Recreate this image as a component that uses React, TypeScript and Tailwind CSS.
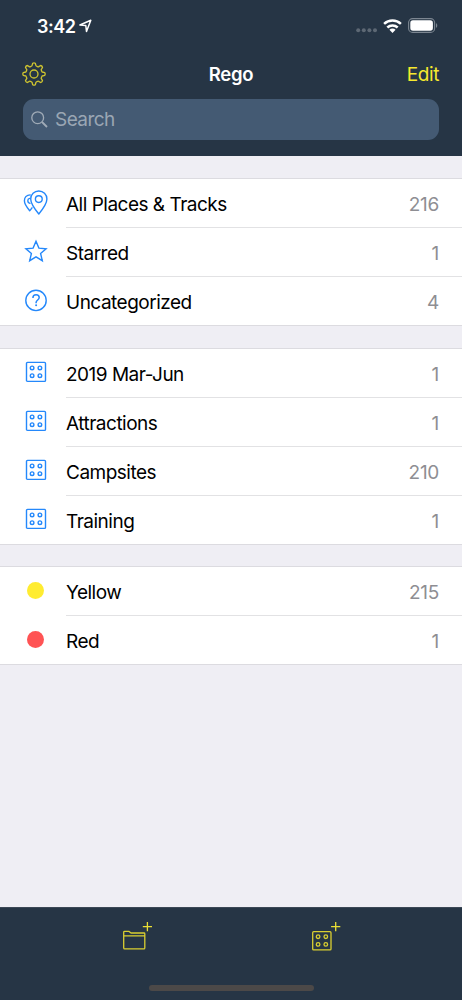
import type { ReactNode } from 'react';

interface Row {
  label: string;
  count: number;
  icon: ReactNode;
}

// Outline with eight rounded teeth, centred on 0,0
const gearPath = () => {
  const point = (radius: number, degrees: number) => {
    const a = (degrees * Math.PI) / 180;
    return `${(radius * Math.sin(a)).toFixed(2)} ${(-radius * Math.cos(a)).toFixed(2)}`;
  };
  let d = `M${point(10.8, -7)}`;
  for (let i = 0; i < 8; i++) {
    const a = i * 45;
    d += `Q${point(11.6, a)} ${point(10.8, a + 7)}`;
    d += `L${point(9.2, a + 11)}Q${point(8, a + 14)} ${point(8.3, a + 19)}`;
    d += `Q${point(7.9, a + 22.5)} ${point(8.3, a + 26)}`;
    d += `Q${point(8, a + 31)} ${point(9.2, a + 34)}L${point(10.8, a + 38)}`;
  }
  return `${d}Z`;
};

function GearIcon() {
  return (
    <svg width="24" height="24" viewBox="-12 -12 24 24" fill="none" stroke="#cfc430" strokeWidth="1.3" strokeLinejoin="round">
      <path d={gearPath()} />
      <circle r="4" />
    </svg>
  );
}

function PlacesIcon() {
  return (
    <svg width="26" height="26" viewBox="0 0 26 26" fill="none" stroke="#2488fb" strokeWidth="1.4" strokeLinejoin="round" strokeLinecap="round">
      <path d="M15.8 1c4.5 0 8.1 3.5 8.1 8 0 4.7-4.5 10.6-8.1 15-3.6-4.4-8.1-10.3-8.1-15 0-4.5 3.6-8 8.1-8Z" />
      <circle cx="15.8" cy="9.1" r="3.4" />
      <path d="M7.2 4.9C3.8 5 1.4 7.4 1.4 10.8c0 3.1 2.7 6.9 5.3 9.9.9-1 1.6-1.9 2.3-2.9M6.6 8.4c-2.4.5-2.5 4.4.3 5" />
    </svg>
  );
}

function StarIcon() {
  return (
    <svg width="26" height="26" viewBox="0 0 26 26" fill="none" stroke="#2488fb" strokeWidth="1.4">
      <path d="M13 2.2l2.9 6.9 7.2.6-5.5 4.8 1.7 7.2-6.3-3.8-6.3 3.8 1.7-7.2-5.5-4.8 7.2-.6Z" />
    </svg>
  );
}

function QuestionIcon() {
  return (
    <svg width="26" height="26" viewBox="0 0 26 26" fill="none" stroke="#2488fb" strokeWidth="1.4">
      <circle cx="13" cy="12.4" r="10.2" />
      <path d="M9.9 9.9c0-2 1.3-3.1 3.2-3.1s3.1 1.2 3.1 2.8c0 2.4-3.1 2.5-3.1 5v.6" strokeWidth="1.5" />
      <circle cx="13.1" cy="17.3" r="1" fill="#2488fb" stroke="none" />
    </svg>
  );
}

function CategoryIcon() {
  return (
    <svg width="26" height="26" viewBox="0 0 26 26" fill="none" stroke="#2488fb" strokeWidth="1.4">
      <rect x="3.5" y="2.4" width="19" height="19" rx="1" />
      <circle cx="9.1" cy="7.9" r="1.8" />
      <circle cx="16.9" cy="7.9" r="1.8" />
      <circle cx="9.1" cy="15.7" r="1.8" />
      <circle cx="16.9" cy="15.7" r="1.8" />
    </svg>
  );
}

function YellowDot() {
  return <span className="mr-px mb-px block size-[17px] rounded-full bg-[#ffec31]" />;
}

function RedDot() {
  return <span className="mr-px mb-px block size-[17px] rounded-full bg-[#ff5354]" />;
}

const library: Row[] = [
  { label: 'All Places & Tracks', count: 216, icon: <PlacesIcon /> },
  { label: 'Starred', count: 1, icon: <StarIcon /> },
  { label: 'Uncategorized', count: 4, icon: <QuestionIcon /> },
];

const categories: Row[] = [
  { label: '2019 Mar-Jun', count: 1, icon: <CategoryIcon /> },
  { label: 'Attractions', count: 1, icon: <CategoryIcon /> },
  { label: 'Campsites', count: 210, icon: <CategoryIcon /> },
  { label: 'Training', count: 1, icon: <CategoryIcon /> },
];

const colors: Row[] = [
  { label: 'Yellow', count: 215, icon: <YellowDot /> },
  { label: 'Red', count: 1, icon: <RedDot /> },
];

function Section({ rows }: { rows: Row[] }) {
  return (
    <ul className="border-t border-[#dcdbe0] bg-white">
      {rows.map((row, index) => (
        <li key={row.label} className="flex h-[49px]">
          <div className={`flex w-[66px] shrink-0 items-center pb-px pl-[23px] ${index === rows.length - 1 ? 'border-b border-[#dcdbe0]' : ''}`}>
            <div className="flex w-[26px] justify-center">{row.icon}</div>
          </div>
          <div className={`flex flex-1 items-center justify-between border-b pt-[5px] pr-[23px] ${index === rows.length - 1 ? 'border-[#dcdbe0]' : 'border-[#e2e2e4]'}`}>
            <span className="text-[19px] tracking-[-0.5px] text-black">{row.label}</span>
            <span className="text-[19px] tracking-[-0.3px] text-[#8e8e93]">{row.count}</span>
          </div>
        </li>
      ))}
    </ul>
  );
}

function StatusBar() {
  return (
    <div className="flex h-[52px] items-center justify-between pr-[24px] pl-[37px]">
      <div className="flex items-center gap-[4px]">
        <span className="text-[18px] font-semibold tracking-[-0.5px] text-white">3:42</span>
        <svg width="13" height="14" viewBox="0 0 13 14" fill="none" stroke="#fff" strokeWidth="1.5" strokeLinejoin="round">
          <path d="M11.8 1.2L7.5 12.4 6.8 6.5.9 6Z" />
        </svg>
      </div>
      <div className="flex items-center pb-px">
        <svg width="22" height="14" viewBox="0 0 22 14" fill="#5d6874">
          <circle cx="2.2" cy="11.2" r="2" />
          <circle cx="7.8" cy="11.2" r="2" />
          <circle cx="13.4" cy="11.2" r="2" />
          <circle cx="19" cy="11.2" r="2" />
        </svg>
        <svg className="ml-[5px]" width="19" height="14" viewBox="0 0 19 14" fill="none" stroke="#fff" strokeWidth="2.5">
          <path d="M1.1 4.9c4.7-4.5 12.1-4.5 16.8 0M4.3 8.5c3-2.8 7.4-2.8 10.4 0" />
          <path d="M6.4 10.8c1.8-1.6 4.4-1.6 6.2 0l-3.1 3.1Z" fill="#fff" stroke="none" />
        </svg>
        <svg className="ml-[6px]" width="30" height="15" viewBox="0 0 30 15">
          <rect x=".6" y=".6" width="26" height="13.8" rx="4" fill="none" stroke="#7c8691" strokeWidth="1.1" />
          <rect x="2.3" y="2.3" width="22.6" height="10.4" rx="2.6" fill="#fff" />
          <path d="M28 5.2v4.6c1.7-.6 1.7-4 0-4.6Z" fill="#7c8691" />
        </svg>
      </div>
    </div>
  );
}

function Toolbar() {
  return (
    <div className="h-[93px] border-t border-[#3c4856] bg-[#263545]">
      <div className="flex h-[77px] items-start justify-between pt-[13px] pr-[119px] pl-[122px]">
        <svg width="32" height="32" viewBox="0 0 32 32" fill="none" stroke="#dacf31" strokeWidth="1.3" strokeLinejoin="round">
          <path d="M1.7 14.8h21.1M1.7 26.5V11.2c0-.5.3-.8.8-.8h4.6l1.9 1.6h13c.5 0 .8.3.8.8v13.9c0 .9-.3 1.2-.8 1.2H2.7c-.7 0-1-.3-1-1.2Z" />
          <path d="M25.4 1.1v9.2M20.8 5.7H30" stroke="#eadf35" />
        </svg>
        <svg width="32" height="32" viewBox="0 0 32 32" fill="none" stroke="#dacf31" strokeWidth="1.3">
          <rect x="1.7" y="10.7" width="18.3" height="18.2" rx="1" />
          <circle cx="7.1" cy="15.7" r="1.8" />
          <circle cx="14.8" cy="15.7" r="1.8" />
          <circle cx="7.1" cy="23.4" r="1.8" />
          <circle cx="14.8" cy="23.4" r="1.8" />
          <path d="M24.7 1.1v9.2M20.1 5.7h9.2" stroke="#eadf35" />
        </svg>
      </div>
      <div className="mx-auto h-[6px] w-[165px] rounded-full bg-[#4c4948]" />
    </div>
  );
}

export default function App() {
  return (
    <div className="flex h-[1000px] w-[462px] flex-col overflow-hidden bg-[#efeef4] font-['Inter',sans-serif]">
      <header className="h-[156px] shrink-0 bg-[#263545]">
        <StatusBar />
        <div className="grid h-[44px] grid-cols-3 items-center pr-[23px] pl-[22px]">
          <GearIcon />
          <h1 className="pt-[2px] pl-px text-center text-[18.5px] font-semibold tracking-[-0.25px] text-white">Rego</h1>
          <span className="pt-[2px] text-right text-[19px] tracking-[-0.4px] text-[#f7e92e]">Edit</span>
        </div>
        <div className="mx-[23px] mt-[3px] flex h-[41px] items-center rounded-[11px] bg-[#445a73] pl-[8px]">
          <svg width="17" height="17" viewBox="0 0 17 17" fill="none" stroke="#a0abb7" strokeWidth="1.3">
            <circle cx="6.7" cy="6.7" r="5.9" />
            <path d="M11 11l5 5" strokeWidth="1.8" />
          </svg>
          <span className="ml-[7px] pt-[2px] text-[19px] tracking-[-0.55px] text-[#9aa6b3]">Search</span>
        </div>
      </header>
      <main className="flex flex-1 flex-col pt-[22px]">
        <Section rows={library} />
        <div className="h-[22px]" />
        <Section rows={categories} />
        <div className="h-[21px]" />
        <Section rows={colors} />
      </main>
      <Toolbar />
    </div>
  );
}
